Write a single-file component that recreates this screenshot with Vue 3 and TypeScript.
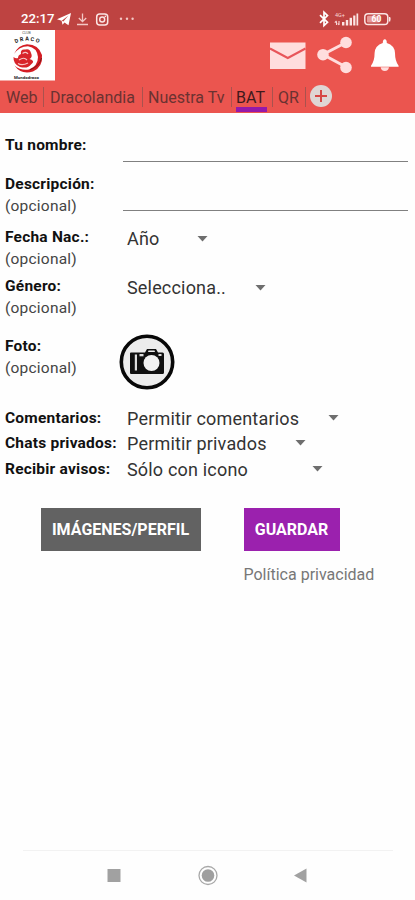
<script setup lang="ts">
import { ref } from 'vue'

interface Field {
  id: string
  label: string
  optional?: boolean
  kind: 'input' | 'select' | 'photo'
  value?: string
  width?: number
}

const tabs: string[] = ['Web', 'Dracolandia', 'Nuestra Tv', 'BAT', 'QR']
const active = ref('BAT')

const fields: Field[] = [
  { id: 'name', label: 'Tu nombre:', kind: 'input' },
  { id: 'desc', label: 'Descripción:', optional: true, kind: 'input' },
  { id: 'birth', label: 'Fecha Nac.:', optional: true, kind: 'select', value: 'Año', width: 81 },
  { id: 'gender', label: 'Género:', optional: true, kind: 'select', value: 'Selecciona..', width: 139 },
  { id: 'photo', label: 'Foto:', optional: true, kind: 'photo' },
  { id: 'comments', label: 'Comentarios:', kind: 'select', value: 'Permitir comentarios', width: 212 },
  { id: 'chats', label: 'Chats privados:', kind: 'select', value: 'Permitir privados', width: 179 },
  { id: 'notices', label: 'Recibir avisos:', kind: 'select', value: 'Sólo con icono', width: 196 },
]
</script>

<template>
  <div class="screen">
    <div class="status">
      <span class="clock">22:17</span>
      <svg class="left-icons" width="80" height="16" viewBox="0 0 80 16">
        <path d="M0 8.2 14 2 11.5 14.2 7.5 11.5 5.5 13.8 4.6 9.8Z" fill="#fff" />
        <path d="M4.8 9.8 11.5 4.5 6.3 10.6" fill="#be4341" />
        <path d="M25.5 2.5V10.5M21.8 7 25.5 10.7 29.2 7M20 13.5H31" fill="none" stroke="#f3c8c6" stroke-width="1.3" />
        <rect x="39.7" y="3" width="11" height="11" rx="3" fill="none" stroke="#fbe5e4" stroke-width="1.5" />
        <circle cx="45.2" cy="8.5" r="2.5" fill="none" stroke="#fbe5e4" stroke-width="1.4" />
        <circle cx="48.3" cy="5.4" r=".8" fill="#fbe5e4" />
        <g fill="#f3c8c6"><circle cx="64" cy="7.7" r="1.2" /><circle cx="70" cy="7.7" r="1.2" /><circle cx="75.6" cy="7.7" r="1.2" /></g>
      </svg>
      <svg class="right-icons" width="76" height="18" viewBox="0 0 76 18">
        <path d="M2 5.2 9.5 12.3 6 15.6V2.2L9.5 5.6 2 12.8" fill="none" stroke="#fff" stroke-width="1.7" />
        <text x="17" y="7" class="net">4G+</text>
        <path d="M18.5 15V11.5M16.8 12.6 18.5 11M21 11V15M19.7 13.5 21 15" fill="none" stroke="#f7d6d5" stroke-width="1.1" />
        <g fill="#fbe5e4">
          <rect x="24" y="12" width="2.4" height="3.5" /><rect x="27.8" y="10" width="2.4" height="5.5" />
          <rect x="31.6" y="7.8" width="2.4" height="7.7" /><rect x="35.2" y="5.5" width="2.2" height="10" />
          <rect x="38.5" y="3.5" width="1.7" height="12" />
        </g>
        <rect x="46.8" y="3.7" width="23" height="10.8" rx="3.3" fill="none" stroke="#fbe5e4" stroke-width="1.5" />
        <rect x="49" y="5.7" width="13" height="6.8" rx="1.2" fill="#e79a98" />
        <path d="M71 7h1.2q1 2.2 0 4.4h-1.2Z" fill="#fbe5e4" />
        <text x="53.5" y="12.1" class="charge">60</text>
      </svg>
    </div>

    <header class="header">
      <div class="brand-row">
        <svg class="brand" width="55" height="51" viewBox="0 0 55 51">
          <rect width="55" height="50.5" fill="#fff" />
          <text x="26.5" y="4.2" class="brand-tiny" text-anchor="middle">CLUB</text>
          <path id="brandArc" d="M15.5 13.3Q27 7.8 39.5 13.3" fill="none" />
          <text class="brand-arc"><textPath href="#brandArc" textLength="24">DRACO</textPath></text>
          <path d="M14 24Q18 15 27 14.2Q39 14.5 42 25Q43 37 33 41.5Q21 45 14.5 35.5Q21 41 29 39.5Q38 36 38 27Q37 17.5 28 16.2Q19 16.5 14 24Z" fill="#d41d24" />
          <path d="M21 24Q20 19 25 19.5Q30 18 31 23Q33 27 29.5 29Q36 31 31 34.5Q28 39 20 37Q13 34 13.5 27Q16 29 18 28Q18 25 21 24Z" fill="#d8242a" />
          <path d="M22.5 23.5Q26 21 28 24M19 30Q24 26.5 27 30M18 33.5Q22 36 28 33" fill="none" stroke="#f8c4c4" stroke-width="1.2" />
          <path d="M30 39.8Q40 36 41.5 28" fill="none" stroke="#7d1717" stroke-width="1" />
          <text x="26.5" y="49" class="brand-foot" text-anchor="middle" textLength="25">Mundodraco</text>
        </svg>
        <svg class="actions" width="140" height="46" viewBox="0 0 140 46">
          <rect x="3" y="10.5" width="35.5" height="26.5" fill="#ffdddd" />
          <path d="M3 16.5 20.8 26 38.5 16.5" fill="none" stroke="#e8555a" stroke-width="2" />
          <path d="M79 10.5 56 22.5 79 35" fill="none" stroke="#ffdddd" stroke-width="3" />
          <g fill="#ffdddd"><circle cx="79" cy="10.5" r="5.8" /><circle cx="56" cy="22.7" r="5.8" /><circle cx="79" cy="35.5" r="5.8" /></g>
          <path d="M117.8 7.3Q119.8 7.3 119.8 11Q127.7 13.5 128 21Q128 29 131.6 33.8V34.8H104V33.8Q107.6 29 107.6 21Q108 13.5 115.8 11Q115.8 7.3 117.8 7.3Z" fill="#fff" />
          <path d="M113.7 35.3H122Q121.5 39 117.8 39Q114 39 113.7 35.3Z" fill="#ffdddd" />
        </svg>
      </div>
      <nav class="tabs">
        <button
          v-for="(tab, i) in tabs"
          :key="tab"
          :class="['tab', 'tab-' + i, { active: tab === active }]"
          @click="active = tab"
        ><span>{{ tab }}</span></button>
        <svg class="add" width="24" height="24" viewBox="0 0 24 24">
          <circle cx="12" cy="12" r="11" fill="#dfd6d4" />
          <path d="M12 6V18M6 12H18" stroke="#d74744" stroke-width="2" />
        </svg>
      </nav>
    </header>

    <main class="form">
      <div v-for="f in fields" :key="f.id" :class="['row', 'row-' + f.id]">
        <div class="caption">
          <label :for="f.id">{{ f.label }}</label>
          <span v-if="f.optional" class="optional">(opcional)</span>
        </div>
        <input v-if="f.kind === 'input'" :id="f.id" type="text" />
        <div v-else-if="f.kind === 'select'" :id="f.id" class="select" :style="{ width: f.width + 'px' }">
          <span>{{ f.value }}</span>
          <svg width="11" height="6" viewBox="0 0 11 6"><path d="M.5 0H10.5L5.5 5.5Z" fill="#6e6e6e" /></svg>
        </div>
        <svg v-else class="photo" width="56" height="56" viewBox="0 0 56 56">
          <circle cx="28" cy="28" r="25.7" fill="#ececec" stroke="#080808" stroke-width="3.6" />
          <path d="M12 18.5H26L28 15H37L39 18.5H43.5Q45 18.5 45 20V38.5Q45 40 43.5 40H12Q11 40 11 38.5V19.5Q11 18.5 12 18.5Z" fill="#101010" />
          <path d="M29.5 16.5H35.5L36 18H29Z" fill="#ececec" />
          <circle cx="32.5" cy="29" r="8" fill="#f2f2f2" />
          <rect x="15.8" y="20.5" width="2.2" height="16" fill="#ddd" />
          <rect x="20.5" y="20" width="4" height="2.3" fill="#ddd" />
          <rect x="39.5" y="20" width="3" height="2" fill="#ddd" />
        </svg>
      </div>

      <div class="buttons">
        <button class="btn profile"><span>IMÁGENES/PERFIL</span></button>
        <button class="btn save"><span>GUARDAR</span></button>
      </div>
      <a class="privacy">Política privacidad</a>
    </main>

    <footer class="navbar">
      <svg width="415" height="52" viewBox="0 0 415 52">
        <rect x="107.5" y="19" width="13" height="13" fill="#a1a1a1" />
        <circle cx="208" cy="25.5" r="9" fill="none" stroke="#a8a8a8" stroke-width="1.3" />
        <circle cx="208" cy="25.5" r="6.3" fill="#9f9f9f" />
        <path d="M294 25.5 306.5 18.5V32.5Z" fill="#a1a1a1" />
      </svg>
    </footer>
  </div>
</template>

<style>
body {
  margin: 0;
  background: #fefefe;
}
</style>

<style scoped>
.screen {
  display: flex;
  flex-direction: column;
  width: 415px;
  height: 900px;
  overflow: hidden;
  background: #fefefe;
  color: #222;
  font-family: Roboto, "Liberation Sans", sans-serif;
}
svg {
  display: block;
  flex: none;
}
button {
  border: 0;
  padding: 0;
  font-family: inherit;
}
.status {
  display: flex;
  align-items: flex-start;
  height: 30px;
  flex: none;
  box-sizing: border-box;
  padding: 10px 21px 0 21px;
  background: #be4341;
}
.clock {
  width: 36px;
  font-size: 13.2px;
  line-height: 18px;
  font-weight: 500;
  color: #fff;
  white-space: nowrap;
}
.left-icons {
  margin-top: 1px;
}
.right-icons {
  margin-left: auto;
}
.net {
  font-size: 5.5px;
  fill: #f7d6d5;
}
.charge {
  font-size: 8.5px;
  font-weight: 700;
  fill: #fff;
}
.header {
  display: flex;
  flex-direction: column;
  height: 83px;
  flex: none;
  background: #eb554f;
}
.brand-row {
  display: flex;
  justify-content: space-between;
  height: 52px;
  padding-right: 8px;
}
.actions {
  margin-top: 1.6px;
}
.brand-tiny {
  font-size: 3.5px;
  fill: #555;
}
.brand-arc {
  font-size: 5.5px;
  font-weight: 700;
  fill: #222;
}
.brand-foot {
  font-size: 4.3px;
  font-weight: 700;
  fill: #222;
}
.tabs {
  display: flex;
  align-items: flex-start;
  height: 31px;
}
.tab {
  position: relative;
  box-sizing: border-box;
  height: 30px;
  padding: 0 0 0 6px;
  background: none;
  color: #6a3231;
  font-size: 16px;
  line-height: 32px;
  text-align: left;
  white-space: nowrap;
}
.tab::after {
  content: '';
  position: absolute;
  right: 0;
  top: 5px;
  width: 1px;
  height: 20px;
  background: #a9524e;
}
.tab-0 { width: 44px; }
.tab-1 { width: 99px; }
.tab-2 { width: 89px; padding-left: 5px; }
.tab-3 { width: 41px; padding-left: 4px; }
.tab-4 { width: 33px; padding-left: 5px; }
.tab.active {
  color: #40191c;
}
.tab.active span {
  display: block;
  width: 31px;
  height: 25px;
  border-bottom: 5px solid #9519a9;
}
.add {
  margin: 2px 0 0 3px;
}
.form {
  display: flex;
  flex-direction: column;
  flex: 1;
  padding-top: 21px;
}
.row {
  display: flex;
  align-items: flex-start;
  flex: none;
  padding-left: 5px;
}
.caption {
  display: flex;
  flex-direction: column;
  width: 118px;
  flex: none;
  font-size: 15.5px;
  line-height: 22px;
  letter-spacing: 0.22px;
  white-space: nowrap;
}
.caption label {
  font-weight: 700;
  color: #111;
}
.optional {
  color: #444;
}
.row-name { height: 39px; }
.row-desc { height: 53px; }
.row-birth { height: 49px; }
.row-gender { height: 60px; }
.row-photo { height: 72px; }
.row-comments,
.row-notices { height: 25px; }
.row-chats { height: 26px; }
input {
  width: 285px;
  height: 28px;
  box-sizing: border-box;
  padding: 0;
  border: 0;
  border-bottom: 1px solid #808080;
  border-radius: 0;
  background: none;
  outline: none;
  font-size: 17px;
}
.row-desc input {
  height: 38px;
}
.select {
  display: flex;
  align-items: center;
  justify-content: space-between;
  height: 25px;
  margin-left: 4px;
  font-size: 18px;
  line-height: 25px;
  letter-spacing: 0.18px;
  color: #333;
  white-space: nowrap;
}
.row-comments .select,
.row-chats .select,
.row-notices .select {
  height: 22px;
}
.photo {
  margin: -1px 0 0 -4px;
}
.buttons {
  display: flex;
  gap: 43px;
  flex: none;
  margin: 25px 0 0 40.5px;
}
.btn {
  height: 43px;
  color: #fff;
  font-size: 16px;
  font-weight: 700;
  line-height: 44px;
  white-space: nowrap;
}
.profile {
  width: 160px;
  background: #626262;
}
.save {
  width: 96px;
  background: #9b21ae;
}
.privacy {
  margin: 13px 0 0 243.5px;
  font-size: 16px;
  line-height: 22px;
  color: #777;
  white-space: nowrap;
}
.navbar {
  position: relative;
  height: 50px;
  flex: none;
}
.navbar::before {
  content: '';
  position: absolute;
  top: 0;
  left: 23px;
  right: 22px;
  height: 1px;
  background: #f2f2f2;
}
</style>
